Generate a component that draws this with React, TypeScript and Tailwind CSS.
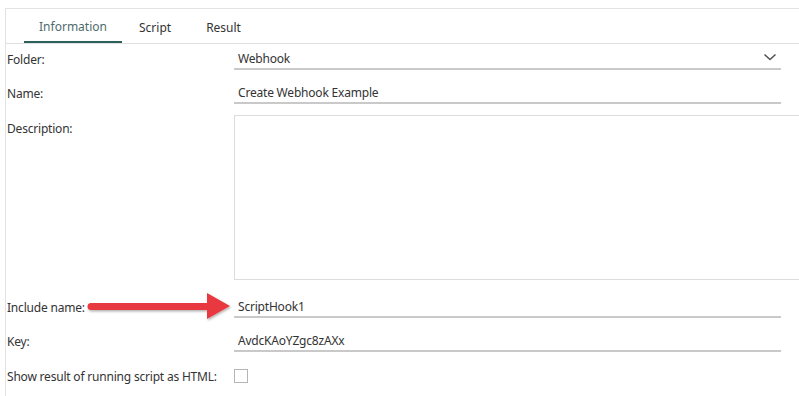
import React from "react";

const font = { fontFamily: '"Noto Sans", "Open Sans", sans-serif' };

function Underlined({ children, arrow }: { children?: React.ReactNode; arrow?: boolean }) {
  return (
    <div className="relative flex h-[26px] w-[547px] shrink-0 items-center border-b-2 border-[#c9c9c9] pl-[4px] pt-[5px] text-[12px] tracking-[-0.2px] text-[#333]">
      <span className="flex-1">{children}</span>
      {arrow && (
        <svg width="14" height="10" viewBox="0 0 14 10" className="mb-[3px] mr-[4px]">
          <path d="M1.5 2.5 L7 7.5 L12.5 2.5" fill="none" stroke="#555" strokeWidth="1.6" />
        </svg>
      )}
    </div>
  );
}

const labelCls = "flex h-[26px] w-[228px] shrink-0 items-center whitespace-nowrap pl-[1px] pt-[5px]";

export default function App() {
  return (
    <div className="relative h-[396px] w-[799px] overflow-hidden bg-white" style={font}>
      <div className="ml-[5px] mt-[8px] h-[400px] border-l border-t border-[#e3e3e3]">
        {/* Tabs */}
        <div className="flex h-[35px] items-end border-b border-[#e0e0e0] pl-[18px] text-[12px]">
          <div className="flex h-[33px] w-[98px] items-center justify-center border-b-2 border-[#2f5f5c] pt-[2px] text-[#4d6b6b]">
            Information
          </div>
          <div className="flex h-[33px] items-center pl-[17px] pr-[17px] pt-[2px] text-[#333]">Script</div>
          <div className="flex h-[33px] items-center pl-[18px] pt-[2px] text-[#333]">Result</div>
        </div>

        <div className="text-[12px] tracking-[-0.2px] text-[#333]">
          {/* Folder */}
          <div className="flex">
            <div className={labelCls}>Folder:</div>
            <Underlined arrow>Webhook</Underlined>
          </div>
          {/* Name */}
          <div className="mt-[8px] flex">
            <div className={labelCls}>Name:</div>
            <Underlined>Create Webhook Example</Underlined>
          </div>
          {/* Description */}
          <div className="mt-[11px] flex">
            <div className="w-[228px] shrink-0 pl-[1px] pt-[5px]">Description:</div>
            <div className="h-[165px] w-[600px] shrink-0 border border-[#dcdcdc]"></div>
          </div>
          {/* Include name */}
          <div className="mt-[12px] flex">
            <div className={labelCls}>Include name:</div>
            <Underlined>ScriptHook1</Underlined>
          </div>
          {/* Key */}
          <div className="mt-[8px] flex">
            <div className={labelCls}>Key:</div>
            <Underlined>AvdcKAoYZgc8zAXx</Underlined>
          </div>
          {/* Checkbox */}
          <div className="mt-[15px] flex items-center">
            <div className="flex h-[18px] w-[228px] shrink-0 items-center whitespace-nowrap pl-[1px] pt-[1px]">
              Show result of running script as HTML:
            </div>
            <div className="h-[14px] w-[14px] shrink-0 border border-[#b5b5b5] bg-white"></div>
          </div>
        </div>
      </div>

      {/* Red arrow annotation */}
      <svg className="absolute left-0 top-0" width="799" height="396" viewBox="0 0 799 396">
        <defs>
          <filter id="sh" x="-10%" y="-50%" width="120%" height="200%">
            <feDropShadow dx="1" dy="1.5" stdDeviation="1.2" floodColor="#000" floodOpacity="0.3" />
          </filter>
        </defs>
        <g filter="url(#sh)">
          <line x1="91" y1="306.5" x2="212" y2="306.5" stroke="#e8393f" strokeWidth="7" strokeLinecap="round" />
          <polygon points="207,293 230,306 207,319" fill="#e8393f" />
        </g>
      </svg>
    </div>
  );
}
